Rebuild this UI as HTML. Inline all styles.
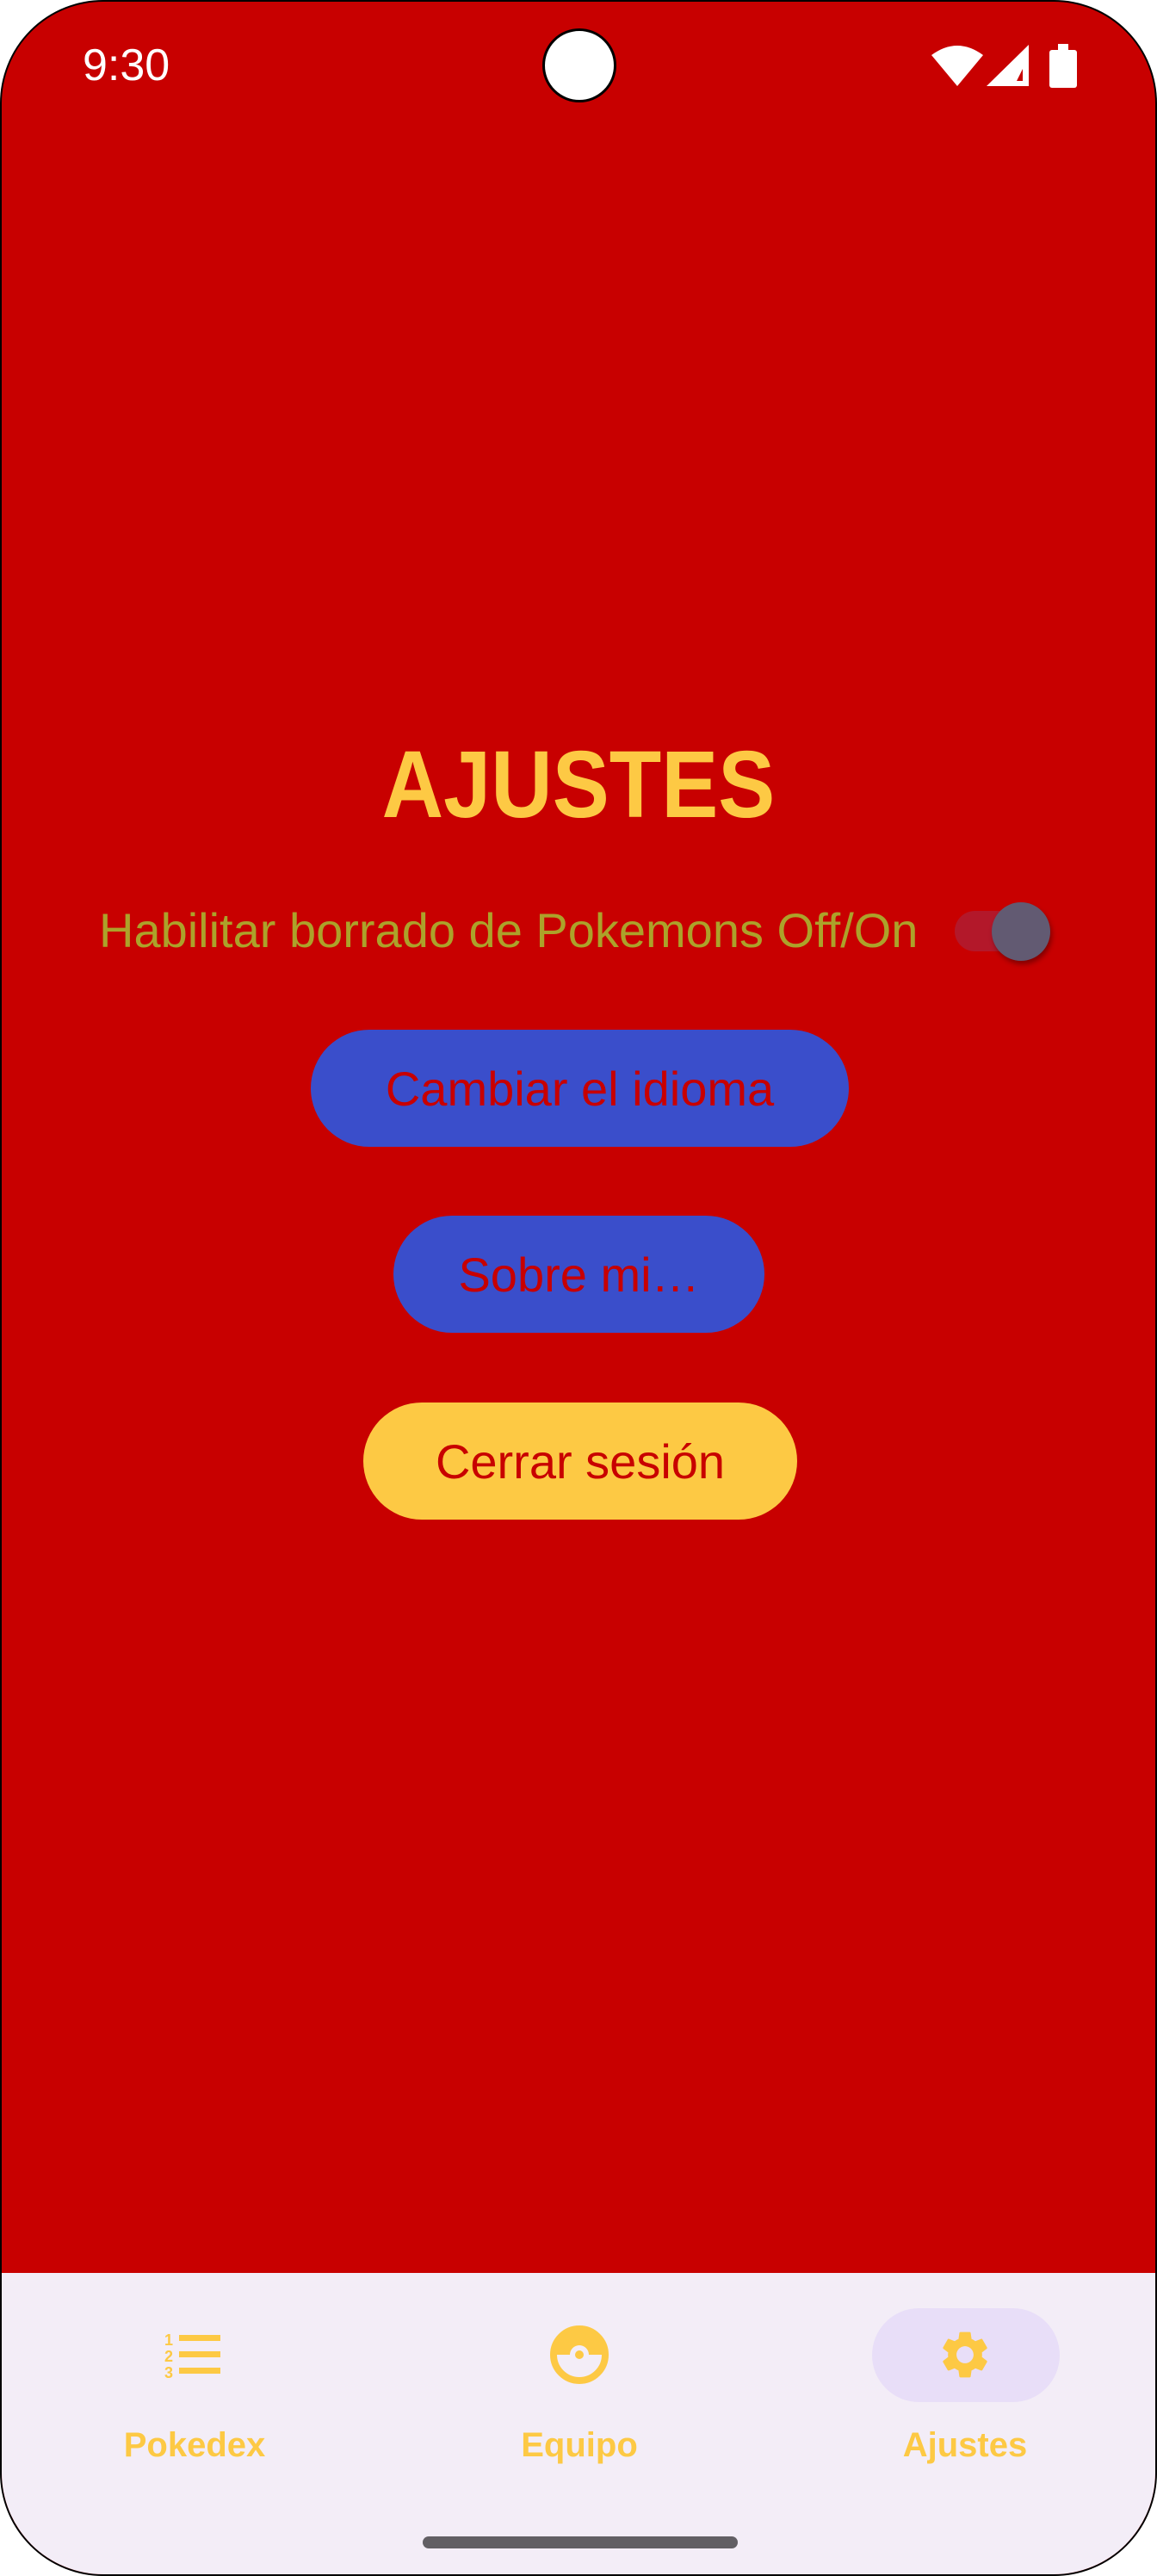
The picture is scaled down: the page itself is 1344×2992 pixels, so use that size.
<!DOCTYPE html>
<html><head><meta charset="utf-8"><style>
html,body{margin:0;padding:0;background:#fff;}
body{width:1344px;height:2992px;position:relative;overflow:hidden;font-family:"Liberation Sans",sans-serif;}
.phone{position:absolute;left:0;top:0;width:1340px;height:2988px;border:2px solid #000;border-radius:120px;overflow:hidden;background:#c80000;}
.abs{position:absolute;}
.btn{position:absolute;border-radius:70px;display:flex;align-items:center;justify-content:center;color:#c80000;font-size:56px;}
</style></head><body>
<div class="phone">
  <div class="abs" style="left:94px;top:44px;font-size:52px;color:#fff;">9:30</div>
  <div class="abs" style="left:628px;top:31px;width:80px;height:80px;border-radius:50%;background:#fff;border:3px solid #000;"></div>
  <svg class="abs" style="left:1078px;top:48px" width="175" height="54" viewBox="0 0 175 54">
    <path d="M2 14 Q32 -8 62 14 L32 50 Z" fill="#fff"/>
    <path d="M115 2 L115 50 L66 50 Z" fill="#fff"/>
    <path d="M108 18 L108 44 L101 44 L108 30 Z" fill="#c80000"/>
    <rect x="139" y="8" width="32" height="44" rx="3" fill="#fff"/>
    <rect x="149" y="1" width="12" height="8" fill="#fff"/>
  </svg>
  <div class="abs" style="left:0;width:1340px;top:846px;text-align:center;font-size:110px;font-weight:bold;color:#fdc944;transform:scaleX(0.9);">AJUSTES</div>
  <div class="abs" style="left:113px;top:1046px;font-size:56px;color:#aca22a;white-space:nowrap;">Habilitar borrado de Pokemons Off/On</div>
  <div class="abs" style="left:1107px;top:1056px;width:86px;height:47px;border-radius:24px;background:#b3182a;"></div>
  <div class="abs" style="left:1150px;top:1046px;width:68px;height:68px;border-radius:50%;background:#625a72;box-shadow:2px 4px 6px rgba(0,0,0,0.35);"></div>
  <div class="btn" style="left:359px;top:1194px;width:625px;height:136px;background:#3a4ecb;">Cambiar el idioma</div>
  <div class="btn" style="left:455px;top:1410px;width:431px;height:136px;background:#3a4ecb;">Sobre mi…</div>
  <div class="btn" style="left:420px;top:1627px;width:504px;height:136px;background:#fdc944;">Cerrar sesión</div>
  <div class="abs" style="left:0;top:2638px;width:1340px;height:360px;background:#f3edf7;"></div>
  <div class="abs" style="left:1011px;top:2679px;width:218px;height:109px;border-radius:55px;background:#e8def8;"></div>
  <svg class="abs" style="left:188px;top:2704px" width="70" height="58" viewBox="0 0 70 58">
    <g fill="#fdc944"><rect x="18" y="6" width="48" height="7"/><rect x="18" y="25" width="48" height="7"/><rect x="18" y="44" width="48" height="7"/></g>
    <text x="1" y="18" font-size="18" font-weight="bold" fill="#fdc944" font-family="Liberation Sans">1</text>
    <text x="1" y="37" font-size="18" font-weight="bold" fill="#fdc944" font-family="Liberation Sans">2</text>
    <text x="1" y="56" font-size="18" font-weight="bold" fill="#fdc944" font-family="Liberation Sans">3</text>
  </svg>
  <svg class="abs" style="left:637px;top:2699px" width="68" height="68" viewBox="0 0 68 68">
    <circle cx="34" cy="34" r="30" fill="none" stroke="#fdc944" stroke-width="8"/>
    <path d="M4 34 A30 30 0 0 1 64 34 Z" fill="#fdc944"/>
    <circle cx="34" cy="34" r="11" fill="#f3edf7"/>
    <circle cx="34" cy="34" r="5" fill="#fdc944"/>
  </svg>
  <svg class="abs" style="left:1086px;top:2700px" width="66" height="66" viewBox="0 0 24 24">
    <path fill="#fdc944" d="M19.14 12.94c.04-.3.06-.61.06-.94 0-.32-.02-.64-.07-.94l2.030-1.58a.49.49 0 0 0 .12-.61l-1.92-3.32a.49.49 0 0 0-.59-.22l-2.39.96c-.5-.38-1.03-.7-1.62-.94l-.36-2.54a.48.48 0 0 0-.48-.41h-3.84c-.24 0-.43.17-.47.41l-.36 2.54c-.59.24-1.13.57-1.62.94l-2.39-.96a.48.48 0 0 0-.59.22L2.74 8.87c-.12.21-.08.47.12.61l2.03 1.58c-.05.3-.09.63-.09.94s.02.64.07.94l-2.03 1.58a.49.49 0 0 0-.12.61l1.92 3.32c.12.22.37.29.59.22l2.39-.96c.5.38 1.03.7 1.62.94l.36 2.54c.05.24.24.41.48.41h3.84c.24 0 .44-.17.47-.41l.36-2.54c.59-.24 1.13-.56 1.62-.94l2.39.96c.22.08.47 0 .59-.22l1.92-3.32c.12-.22.07-.47-.12-.61l-2.01-1.58zM12 15.6c-1.98 0-3.6-1.620-3.6-3.6s1.62-3.6 3.6-3.6 3.6 1.62 3.6 3.6-1.62 3.6-3.6 3.6z"/>
  </svg>
  <div class="abs" style="left:124px;width:200px;top:2816px;text-align:center;font-size:40px;font-weight:bold;color:#fdc944;">Pokedex</div>
  <div class="abs" style="left:571px;width:200px;top:2816px;text-align:center;font-size:40px;font-weight:bold;color:#fdc944;">Equipo</div>
  <div class="abs" style="left:1019px;width:200px;top:2816px;text-align:center;font-size:40px;font-weight:bold;color:#fdc944;">Ajustes</div>
  <div class="abs" style="left:489px;top:2944px;width:366px;height:14px;border-radius:7px;background:#625f64;"></div>
</div>
</body></html>
